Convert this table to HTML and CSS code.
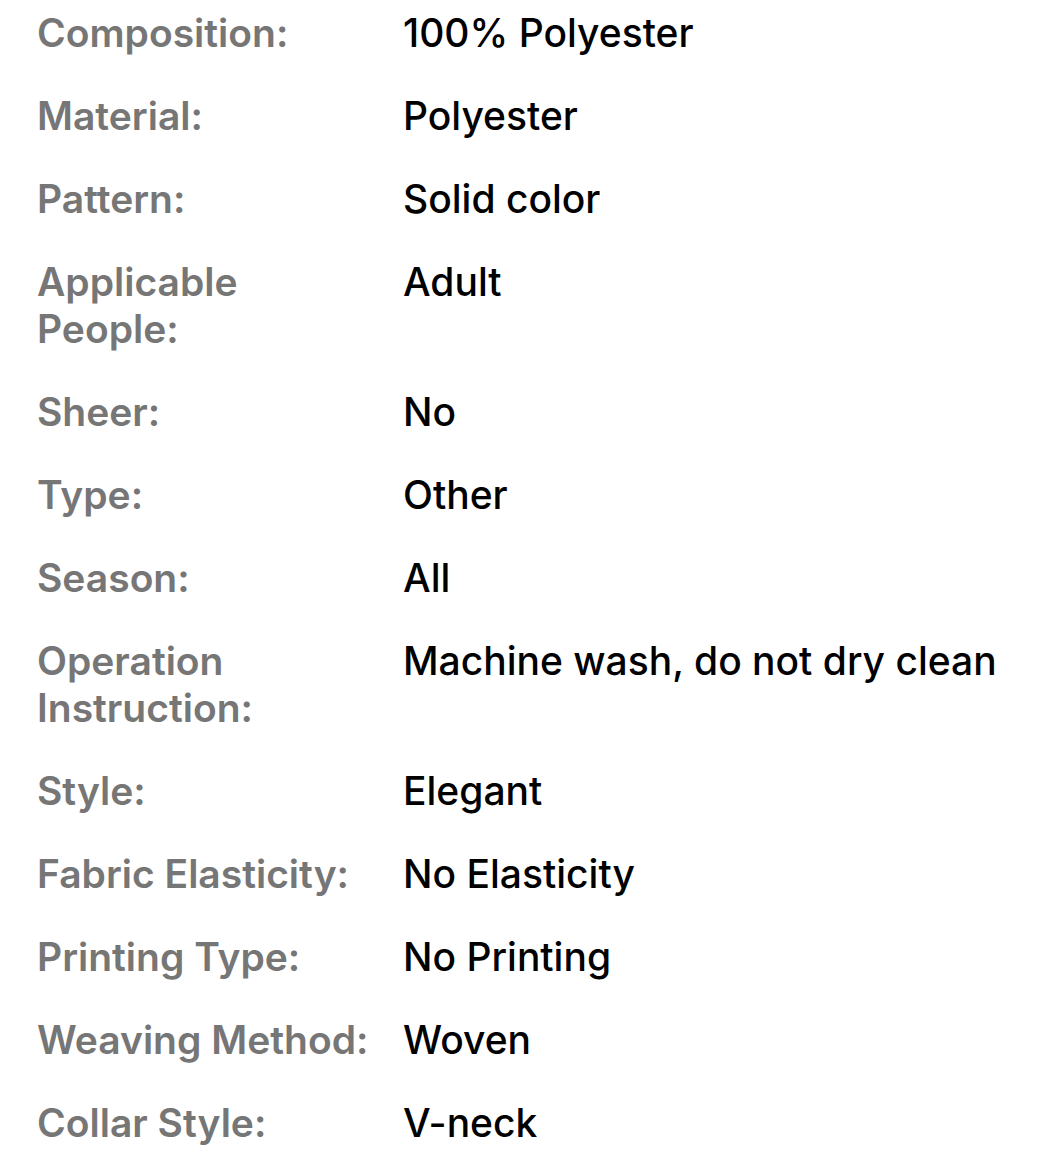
FILE: index.html
```html
<!DOCTYPE html>
<html>
<head>
<meta charset="utf-8">
<link rel="stylesheet" href="styles.css">
</head>
<body>
<dl class="specs">
  <dt>Composition:</dt><dd>100% Polyester</dd>
  <dt>Material:</dt><dd>Polyester</dd>
  <dt>Pattern:</dt><dd>Solid color</dd>
  <dt>Applicable<br>People:</dt><dd>Adult</dd>
  <dt>Sheer:</dt><dd>No</dd>
  <dt>Type:</dt><dd>Other</dd>
  <dt>Season:</dt><dd>All</dd>
  <dt>Operation<br>Instruction:</dt><dd>Machine wash, do not dry clean</dd>
  <dt>Style:</dt><dd>Elegant</dd>
  <dt>Fabric Elasticity:</dt><dd>No Elasticity</dd>
  <dt>Printing Type:</dt><dd>No Printing</dd>
  <dt>Weaving Method:</dt><dd>Woven</dd>
  <dt>Collar Style:</dt><dd>V-neck</dd>
</dl>
</body>
</html>
```

FILE: styles.css
```css
html, body {
  margin: 0;
  padding: 0;
  background: #ffffff;
}
body {
  font-family: Inter, "Noto Sans", sans-serif;
  font-size: 39px;
  line-height: 47px;
  -webkit-font-smoothing: antialiased;
}
.specs {
  margin: 0;
  padding: 9px 0 0 37px;
  display: grid;
  grid-template-columns: 366px 1fr;
  row-gap: 36px;
}
.specs dt {
  margin: 0;
  color: #767676;
  font-weight: 600;
}
.specs dd {
  margin: 0;
  color: #000000;
  font-weight: 500;
  white-space: nowrap;
}
```
